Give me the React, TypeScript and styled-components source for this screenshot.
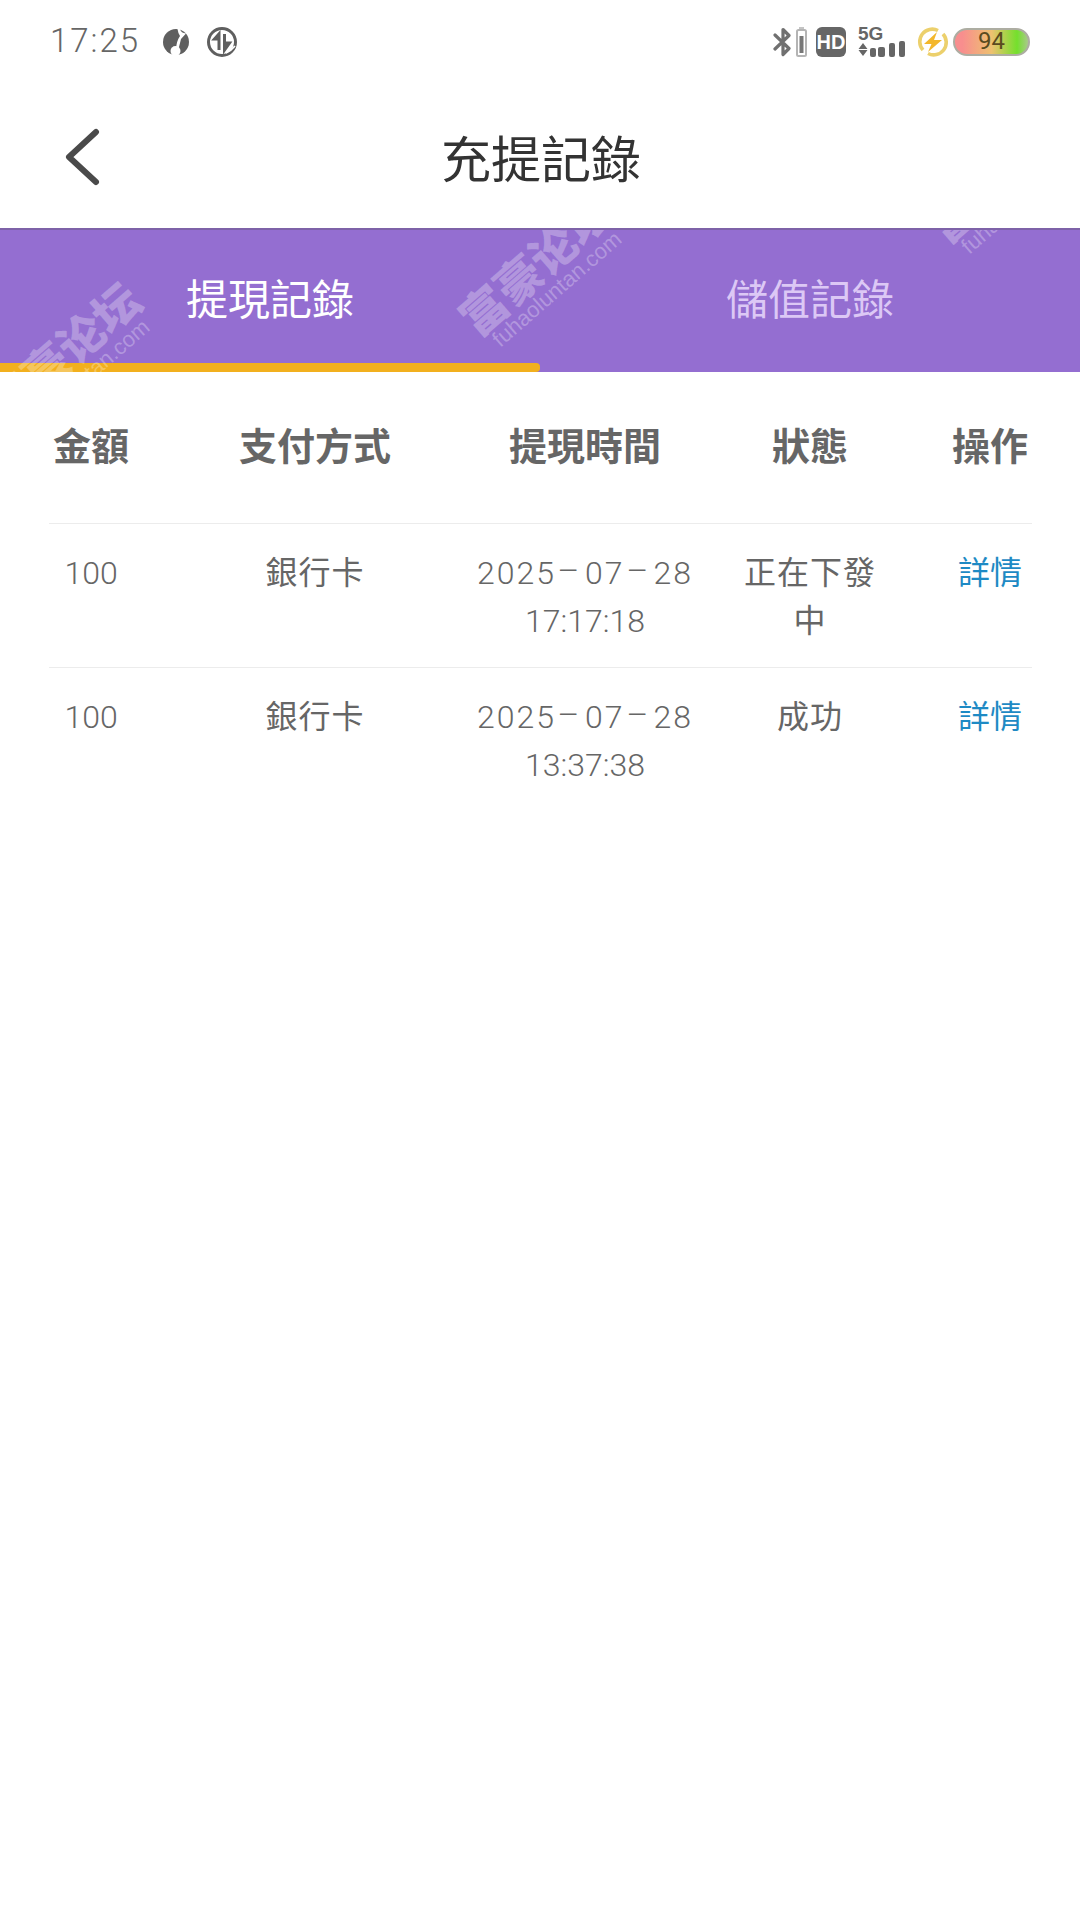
import { FC } from "react";
import styled, { createGlobalStyle } from "styled-components";

const GlobalStyle = createGlobalStyle`
  html, body {
    margin: 0;
    background: #fff;
  }
  body {
    font-family: Roboto, "Noto Sans CJK TC", sans-serif;
  }
`;

interface Registro {
  monto: string;
  metodo: string;
  fecha: string[];
  hora: string;
  estado: string;
}

const registros: Registro[] = [
  { monto: "100", metodo: "銀行卡", fecha: ["2025", "07", "28"], hora: "17:17:18", estado: "正在下發中" },
  { monto: "100", metodo: "銀行卡", fecha: ["2025", "07", "28"], hora: "13:37:38", estado: "成功" },
];

const marcas = [
  { x: 71, y: 131 },
  { x: 543, y: 43 },
  { x: 1012, y: -50 },
];

const Marca: FC<{ x: number; y: number }> = ({ x, y }) => (
  <Watermark $x={x} $y={y}>
    <WatermarkTitle>富豪论坛</WatermarkTitle>
    <WatermarkSub>fuhaoluntan.com</WatermarkSub>
  </Watermark>
);

const IconosIzquierda: FC = () => (
  <>
    <svg width="28" height="28" viewBox="0 0 28 28">
      <circle cx="14" cy="14" r="13" fill="#5f5f5f" />
      <path d="M18 1 Q19 5 24 5.5 L19 11 L16.5 21 L14 21 Q14.5 13 18 8 Q16 5 15.5 1 Z" fill="#fff" />
      <circle cx="13.5" cy="23" r="5" fill="#fff" />
    </svg>
    <svg width="32" height="32" viewBox="0 0 32 32">
      <circle cx="16" cy="16" r="13.5" fill="none" stroke="#5f5f5f" strokeWidth="3" />
      <path d="M13 24 V8 L8.5 13 H13 M18.5 8 V24 L23.5 17 H18.5" fill="#5f5f5f" stroke="#5f5f5f" strokeWidth="3" />
      <path d="M20 27 Q25 25 29 20" fill="none" stroke="#fff" strokeWidth="1.6" />
    </svg>
  </>
);

const IconoBluetooth: FC = () => (
  <svg width="19" height="30" viewBox="0 0 19 30">
    <path d="M2 8 L16 21.5 L10 27.5 V2.5 L16 8.5 L2 22" fill="none" stroke="#707070" strokeWidth="3.2" strokeLinecap="round" strokeLinejoin="round" />
  </svg>
);

const IconoBateriaChica: FC = () => (
  <svg width="11" height="30" viewBox="0 0 11 30">
    <rect x="3" y="0" width="5" height="3" fill="#c4c4c4" />
    <rect x="1" y="3" width="9" height="26" rx="1.5" fill="#fff" stroke="#b4b4b4" strokeWidth="2" />
    <rect x="3.5" y="9" width="4" height="17" fill="#777" />
  </svg>
);

const IconoSenal: FC = () => (
  <svg width="50" height="32" viewBox="0 0 50 32">
    <path d="M5 17 L9.5 23 H0.5 Z M0.5 24 H9.5 L5 30 Z" fill="#666" />
    <rect x="12" y="22" width="6" height="9" rx="2" fill="#666" />
    <rect x="20" y="21" width="7" height="10" rx="2" fill="#666" />
    <rect x="31" y="17" width="6" height="14" rx="2" fill="#666" />
    <rect x="41" y="15" width="6" height="16" rx="2" fill="#666" />
  </svg>
);

const IconoRayo: FC = () => (
  <svg width="32" height="32" viewBox="0 0 32 32">
    <path d="M6 24 A12.5 12.5 0 0 1 21 4.5" fill="none" stroke="#ecd06c" strokeWidth="3.6" />
    <path d="M26 8 A12.5 12.5 0 0 1 11 27.5" fill="none" stroke="#ecd06c" strokeWidth="3.6" />
    <path d="M20 6 L7 18 H14.5 L11 26 L25 14 H17 Z" fill="#f3b72c" />
  </svg>
);

const IconoAtras: FC = () => (
  <svg width="42" height="60" viewBox="0 0 42 60">
    <path d="M34 4 L7 29 L34 54" fill="none" stroke="#4a4a4a" strokeWidth="6" strokeLinecap="round" strokeLinejoin="round" />
  </svg>
);

export default function App() {
  return (
    <Page>
      <GlobalStyle />
      <StatusBar>
        <StatusLeft>
          <Clock>17:25</Clock>
          <LeftIcons>
            <IconosIzquierda />
          </LeftIcons>
        </StatusLeft>
        <StatusRight>
          <IconoBluetooth />
          <IconoBateriaChica />
          <HdBadge>HD</HdBadge>
          <SignalBox>
            <FiveG>5G</FiveG>
            <IconoSenal />
          </SignalBox>
          <IconoRayo />
          <BatteryPill>94</BatteryPill>
        </StatusRight>
      </StatusBar>

      <NavBar>
        <BackButton>
          <IconoAtras />
        </BackButton>
        <Title>充提記錄</Title>
      </NavBar>

      <TabBar>
        <Tab $active>提現記錄</Tab>
        <Tab>儲值記錄</Tab>
        {marcas.map((m) => (
          <Marca key={m.x} x={m.x} y={m.y} />
        ))}
      </TabBar>

      <Table>
        <HeaderRow>
          <div>金額</div>
          <div>支付方式</div>
          <div>提現時間</div>
          <div>狀態</div>
          <div>操作</div>
        </HeaderRow>
        {registros.map((r) => (
          <DataRow key={r.hora}>
            <div>{r.monto}</div>
            <Wide>{r.metodo}</Wide>
            <div>
              <DateLine>
                {r.fecha[0]}
                <Dash>-</Dash>
                {r.fecha[1]}
                <Dash>-</Dash>
                {r.fecha[2]}
              </DateLine>
              <br />
              {r.hora}
            </div>
            <Wide>{r.estado}</Wide>
            <DetailLink>詳情</DetailLink>
          </DataRow>
        ))}
      </Table>
    </Page>
  );
}

const Page = styled.div`
  width: 1080px;
  height: 1926px;
  background: #fff;
  overflow: hidden;
`;

const StatusBar = styled.div`
  height: 84px;
  padding: 0 50px;
  display: flex;
  align-items: center;
  justify-content: space-between;
`;

const StatusLeft = styled.div`
  display: flex;
  align-items: center;
  gap: 22px;
`;

const Clock = styled.span`
  margin-top: -3px;
  font-size: 33px;
  font-weight: 300;
  letter-spacing: 2px;
  color: #666;
`;

const LeftIcons = styled.div`
  display: flex;
  align-items: center;
  gap: 16px;
`;

const StatusRight = styled.div`
  display: flex;
  align-items: center;
  gap: 4px;
`;

const HdBadge = styled.span`
  width: 30px;
  height: 30px;
  margin: 0 8px 0 5px;
  border-radius: 6px;
  background: #666;
  color: #fff;
  font-family: "Liberation Sans", sans-serif;
  font-size: 20px;
  font-weight: 700;
  line-height: 30px;
  text-align: center;
`;

const SignalBox = styled.div`
  position: relative;
  width: 50px;
  height: 32px;
  margin-right: 5px;
`;

const FiveG = styled.span`
  position: absolute;
  left: 0;
  top: -3px;
  font-family: "Liberation Sans", sans-serif;
  font-size: 19px;
  font-weight: 700;
  color: #666;
`;

const BatteryPill = styled.span`
  width: 77px;
  height: 28px;
  border-radius: 14px;
  box-sizing: border-box;
  border: 2px solid #adada2;
  background: linear-gradient(90deg, #f88e8e 10%, #eec170 50%, #74e02c 85%, #a9c98a 100%);
  color: #5a4a20;
  font-size: 24px;
  font-weight: 400;
  line-height: 23px;
  text-align: center;
`;

const NavBar = styled.div`
  height: 144px;
  position: relative;
  display: flex;
  align-items: center;
  justify-content: center;
`;

const BackButton = styled.div`
  position: absolute;
  left: 62px;
  top: 44px;
  line-height: 0;
`;

const Title = styled.h1`
  margin: 0 0 0 2px;
  font-size: 50px;
  font-weight: 400;
  color: #333;
`;

const TabBar = styled.div`
  position: relative;
  height: 144px;
  box-sizing: border-box;
  display: flex;
  overflow: hidden;
  background: #946ed1;
  border-top: 2px solid #7e62a8;
`;

const Tab = styled.div<{ $active?: boolean }>`
  position: relative;
  flex: 1;
  padding-bottom: 9px;
  display: flex;
  align-items: center;
  justify-content: center;
  font-size: 42px;
  color: ${(p) => (p.$active ? "#fff" : "#dcc8f5")};

  &::after {
    content: "";
    display: ${(p) => (p.$active ? "block" : "none")};
    position: absolute;
    left: 0;
    right: 0;
    bottom: 0;
    height: 9px;
    background: #f2b01e;
    border-radius: 0 4px 4px 0;
  }
`;

const Watermark = styled.div<{ $x: number; $y: number }>`
  position: absolute;
  left: ${(p) => p.$x}px;
  top: ${(p) => p.$y}px;
  width: 220px;
  transform: translate(-50%, -50%) rotate(-41deg);
  color: rgba(255, 255, 255, 0.28);
  text-align: center;
  line-height: 1;
`;

const WatermarkTitle = styled.div`
  font-size: 46px;
  font-weight: 900;
`;

const WatermarkSub = styled.div`
  margin-top: -3px;
  font-family: "Liberation Sans", sans-serif;
  font-size: 22px;
`;

const Table = styled.div`
  margin: 0 48px 0 49px;
`;

const Row = styled.div`
  display: grid;
  grid-template-columns: 126px 280px 260px 190px 127px;
  text-align: center;
  color: #666;

  > :nth-child(1) {
    padding-right: 42px;
  }
  > :nth-child(4) {
    padding: 0 25px;
  }
  > :nth-child(5) {
    padding-left: 43px;
  }
`;

const HeaderRow = styled(Row)`
  height: 152px;
  padding-bottom: 8px;
  box-sizing: border-box;
  align-items: center;
  font-size: 38px;
  font-weight: 700;
  border-bottom: 1px solid #ececec;
`;

const DataRow = styled(Row)`
  padding: 25px 0 22px;
  font-size: 32px;
  font-weight: 300;
  line-height: 48px;
  border-bottom: 1px solid #ececec;

  &:last-child {
    border-bottom: none;
  }
`;

const Wide = styled.div`
  font-weight: 400;
  letter-spacing: 1px;
`;

const DateLine = styled.span`
  letter-spacing: 2px;
`;

const Dash = styled.span`
  display: inline-block;
  width: 29px;
  text-align: center;
  transform: translateY(-4px) scaleX(2.2);
`;

const DetailLink = styled.a`
  font-weight: 400;
  color: #1e8ac4;
`;
